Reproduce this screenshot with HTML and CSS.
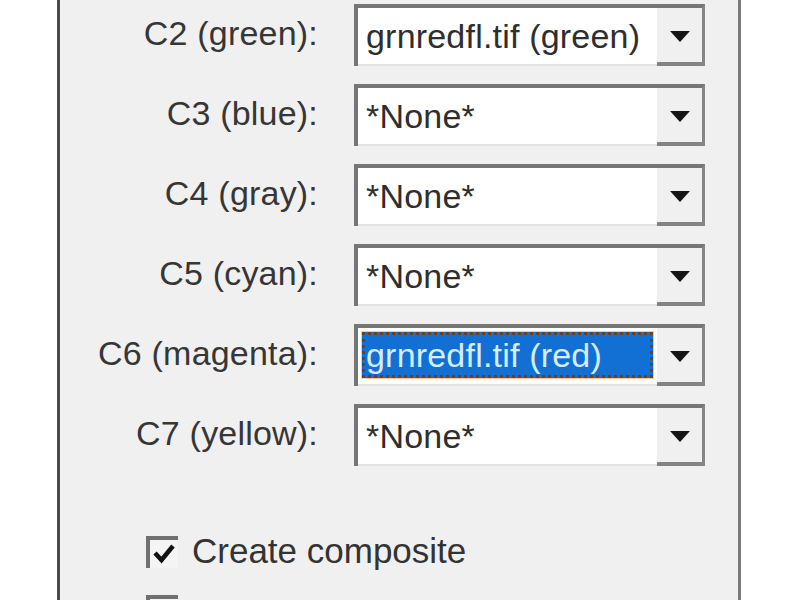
FILE: index.html
```html
<!DOCTYPE html>
<html>
<head>
<meta charset="utf-8">
<link rel="stylesheet" href="styles.css">
</head>
<body>
<div class="dialog">
  <div class="fields">
    <label class="lbl">C2 (green):</label>
    <div class="combo"><div class="field">grnredfl.tif (green)</div><div class="btn"><span class="arrow"></span></div></div>
    <label class="lbl">C3 (blue):</label>
    <div class="combo"><div class="field">*None*</div><div class="btn"><span class="arrow"></span></div></div>
    <label class="lbl">C4 (gray):</label>
    <div class="combo"><div class="field">*None*</div><div class="btn"><span class="arrow"></span></div></div>
    <label class="lbl">C5 (cyan):</label>
    <div class="combo"><div class="field">*None*</div><div class="btn"><span class="arrow"></span></div></div>
    <label class="lbl">C6 (magenta):</label>
    <div class="combo"><div class="field focused"><span class="sel">grnredfl.tif (red)</span></div><div class="btn"><span class="arrow"></span></div></div>
    <label class="lbl">C7 (yellow):</label>
    <div class="combo"><div class="field">*None*</div><div class="btn"><span class="arrow"></span></div></div>
  </div>
  <div class="checks">
    <div class="check"><span class="box checked"><svg viewBox="0 0 24 24" width="24" height="24"><path d="M3 11 L9.5 18 L21 4" fill="none" stroke="#111" stroke-width="4.5" stroke-linejoin="miter"/></svg></span><span class="ctext">Create composite</span></div>
    <div class="check"><span class="box"></span></div>
  </div>
</div>
</body>
</html>
```

FILE: styles.css
```css
html, body {
  margin: 0;
  padding: 0;
  background: #ffffff;
  height: 600px;
  overflow: hidden;
}
body {
  font-family: "Liberation Sans", Arial, sans-serif;
  font-size: 34px;
  color: #363636;
}
.dialog {
  margin-left: 57px;
  width: 684px;
  height: 600px;
  box-sizing: border-box;
  background: #f0f0f0;
  border-left: 3px solid #4a4a4a;
  border-right: 3px solid #7a7a7a;
  padding-top: 4px;
}
.fields {
  display: grid;
  grid-template-columns: 260px 351px;
  column-gap: 34px;
  row-gap: 18px;
  grid-auto-rows: 62px;
}
.lbl {
  text-align: right;
  align-self: center;
  margin-top: -4px;
  margin-right: 2px;
  white-space: nowrap;
  letter-spacing: 0.2px;
}
.combo {
  display: flex;
  box-sizing: border-box;
  border-top: 4px solid #767676;
  border-left: 4px solid #767676;
  border-right: 3px solid #858585;
  background: #f0f0f0;
}
.field {
  flex: 1;
  background: #ffffff;
  border-bottom: 2px solid #e2e2e2;
  padding-left: 8px;
  display: flex;
  align-items: center;
  white-space: nowrap;
  overflow: hidden;
  color: #2e2e2e;
  letter-spacing: 0.2px;
}
.field.focused {
  padding: 4px 4px 6px 4px;
  align-items: stretch;
}
.sel {
  flex: 1;
  display: flex;
  align-items: center;
  background: #1270d4;
  color: #d6ecff;
  border: 3px dotted #6b3f22;
  outline: 1px solid #f2c9a0;
  padding-left: 1px;
}
.btn {
  width: 45px;
  background: #f0f0f0;
  border-bottom: 4px solid #838383;
  display: flex;
  align-items: center;
  justify-content: center;
}
.arrow {
  width: 0;
  height: 0;
  border-left: 10px solid transparent;
  border-right: 10px solid transparent;
  border-top: 11px solid #151515;
  margin-top: 2px;
}
.checks {
  margin-top: 70px;
  padding-left: 86px;
  display: flex;
  flex-direction: column;
  row-gap: 27px;
}
.check {
  display: flex;
  align-items: center;
  height: 32px;
}
.box {
  width: 32px;
  height: 32px;
  box-sizing: border-box;
  border-top: 4px solid #707070;
  border-left: 4px solid #707070;
  background: #f4f4f4;
  display: flex;
  align-items: center;
  justify-content: center;
  margin-right: 14px;
}
.ctext {
  font-size: 35px;
  color: #333;
  margin-top: -2px;
}
```
